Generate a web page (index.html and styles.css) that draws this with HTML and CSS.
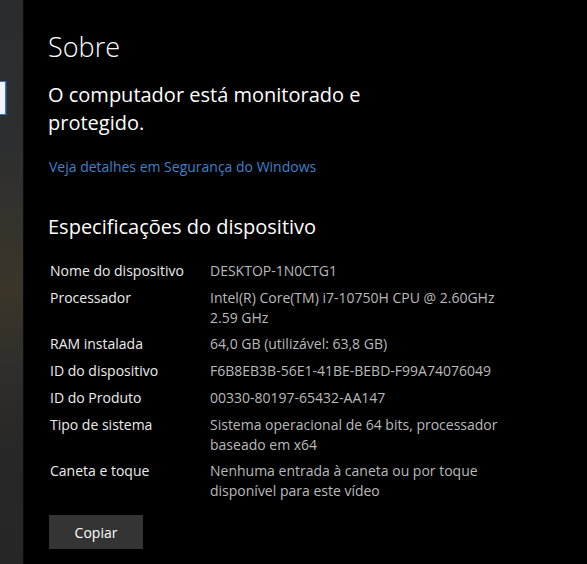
FILE: index.html
```html
<!DOCTYPE html>
<html lang="pt-BR">
<head>
<meta charset="utf-8">
<title>Sobre</title>
<link rel="stylesheet" href="styles.css">
</head>
<body>
<div class="window">
  <aside class="rail">
    <div class="rail-mark"></div>
  </aside>
  <main class="content">
    <h1 class="title">Sobre</h1>
    <p class="status">O computador está monitorado e<br>protegido.</p>
    <a class="link" href="#">Veja detalhes em Segurança do Windows</a>
    <h2 class="section">Especificações do dispositivo</h2>
    <dl class="specs">
      <dt>Nome do dispositivo</dt>
      <dd>DESKTOP-1N0CTG1</dd>
      <dt>Processador</dt>
      <dd><span>Intel(R) Core(TM) i7-10750H CPU @ 2.60GHz</span><span>2.59 GHz</span></dd>
      <dt>RAM instalada</dt>
      <dd>64,0 GB (utilizável: 63,8 GB)</dd>
      <dt>ID do dispositivo</dt>
      <dd>F6B8EB3B-56E1-41BE-BEBD-F99A74076049</dd>
      <dt>ID do Produto</dt>
      <dd>00330-80197-65432-AA147</dd>
      <dt>Tipo de sistema</dt>
      <dd><span>Sistema operacional de 64 bits, processador</span><span>baseado em x64</span></dd>
      <dt>Caneta e toque</dt>
      <dd><span>Nenhuma entrada à caneta ou por toque</span><span>disponível para este vídeo</span></dd>
    </dl>
    <button class="copy" type="button">Copiar</button>
  </main>
</div>
</body>
</html>
```

FILE: styles.css
```css
html, body {
  margin: 0;
  padding: 0;
  background: #000;
  height: 100%;
}
body {
  font-family: "Open Sans", "Noto Sans", sans-serif;
  color: #ffffff;
}
.window {
  display: flex;
  min-height: 564px;
  height: 100%;
}
.rail {
  width: 24px;
  flex: 0 0 24px;
  background: linear-gradient(180deg, #2a2c30 0%, #2d2e30 25%, #36332b 42%, #3a3528 52%, #302e2b 65%, #272727 80%, #262626 100%);
  border-right: 1px solid #0a0a0a;
  box-sizing: border-box;
  padding-top: 81px;
}
.rail-mark {
  width: 5px;
  height: 32px;
  background: #eef4fa;
  border: 1px solid #3f74b0;
  border-left: none;
  box-shadow: 1px 0 0 #284a70;
}
.content {
  flex: 1;
  padding: 29px 0 0 24px;
}
.title {
  margin: 0;
  font-size: 27px;
  font-weight: 300;
  line-height: 36px;
  color: #fff;
}
.status {
  margin: 16px 0 0;
  font-size: 20px;
  line-height: 28px;
  font-weight: 400;
  color: #fff;
}
.link {
  display: block;
  margin-top: 20px;
  font-size: 14px;
  line-height: 20px;
  color: #3f82cc;
  text-decoration: none;
  padding-left: 1px;
}
.section {
  margin: 36px 0 0;
  font-size: 20px;
  font-weight: 400;
  line-height: 28px;
  color: #fff;
}
.specs {
  display: grid;
  grid-template-columns: 160px auto;
  row-gap: 7px;
  margin: 20px 0 0 2px;
  font-size: 14px;
  line-height: 20px;
}
.specs dt {
  color: #ececec;
}
.specs dd {
  margin: 0;
  color: #bababa;
  white-space: nowrap;
}
.specs dd span {
  display: block;
  line-height: 19.5px;
}
.copy {
  display: block;
  margin: 15px 0 0 1px;
  width: 94px;
  height: 34px;
  border: none;
  background: #343434;
  color: #fff;
  font-family: inherit;
  font-size: 14px;
  padding: 0;
}
```
